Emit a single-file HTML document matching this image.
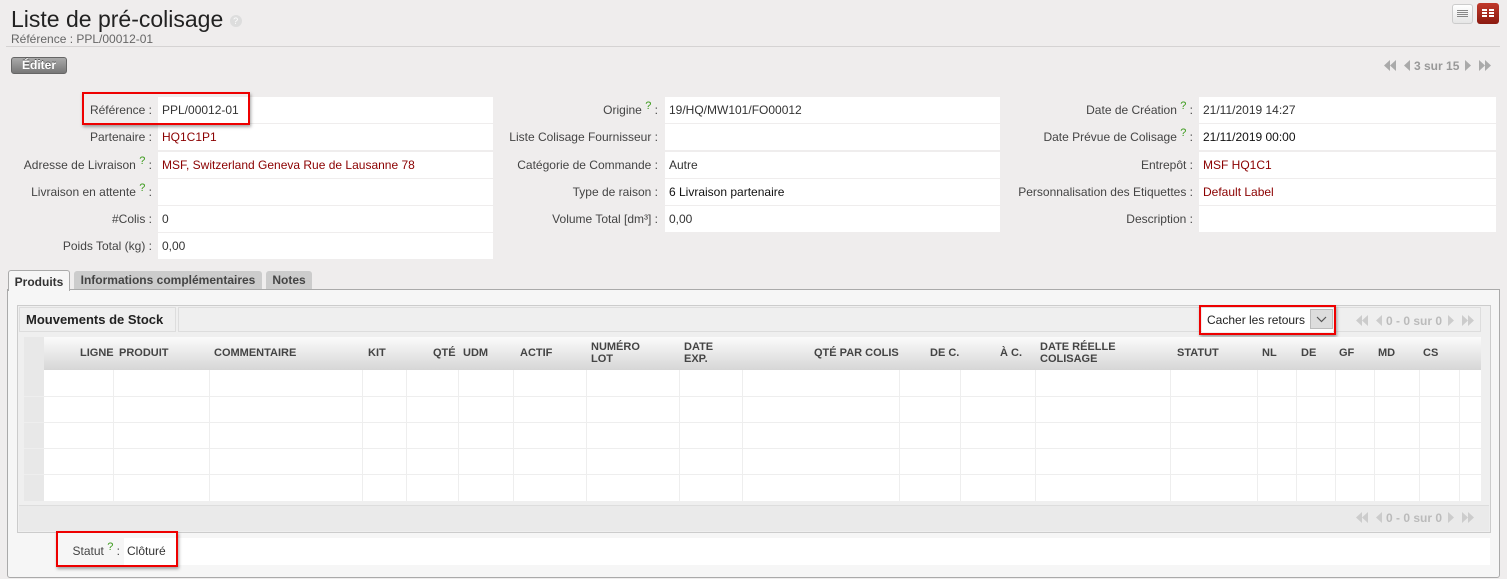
<!DOCTYPE html>
<html><head><meta charset="utf-8">
<style>
*{box-sizing:border-box}
body{margin:0;width:1507px;height:579px;background:#efeded;font-family:"Liberation Sans",Arial,sans-serif;font-size:12px;color:#333;position:relative;overflow:hidden}
.a{position:absolute}
.lbl{position:absolute;text-align:right;color:#444;font-size:12px;line-height:26px;height:26px}
.val{position:absolute;background:#fff;height:26px;line-height:26px;padding-left:4px;font-size:12px;color:#333}
.red{color:#8b0000}
.q{color:#3a9a1a;font-size:11px;position:relative;top:-5px;line-height:0}
.th{position:absolute;font-weight:bold;font-size:11px;color:#444;line-height:12px}
.redbox{position:absolute;border:2px solid #e00;box-shadow:1px 2px 3px rgba(0,0,0,.35)}
.pg{position:absolute;color:#bbb;font-weight:bold;font-size:12px;line-height:12px;white-space:nowrap}
.pg svg{vertical-align:-1px}
</style></head><body>
<div class="a" style="left:11px;top:6px;font-size:23px;color:#222">Liste de pré-colisage <span style="display:inline-block;width:12px;height:12px;border-radius:6px;background:#ddd;color:#fff;font-size:9px;text-align:center;line-height:12px;vertical-align:3px">?</span></div>
<div class="a" style="left:11px;top:32px;font-size:12px;color:#666">Référence : PPL/00012-01</div>
<div class="a" style="left:6px;top:46px;width:1494px;height:1px;background:#d5d3d3"></div>
<div class="a" style="left:1452px;top:4px;width:21px;height:20px;border:1px solid #ccc;border-radius:3px;background:linear-gradient(#fff,#e6e6e6)"><div style="margin:5px 4px;height:8px;background:repeating-linear-gradient(#888 0 1px,transparent 1px 2px)"></div></div>
<div class="a" style="left:1477px;top:3px;width:22px;height:21px;border-radius:3px;background:linear-gradient(#c0392b,#8b1a10)"><div style="margin:6px 5px;height:9px;background:repeating-linear-gradient(90deg,#fff 0 5px,transparent 5px 7px);-webkit-mask:repeating-linear-gradient(#000 0 2px,transparent 2px 3px)"></div></div>
<div class="a" style="left:11px;top:57px;width:56px;height:17px;border:1px solid #666;border-radius:3px;background:linear-gradient(#aaa,#777);color:#fff;font-weight:bold;font-size:12px;text-align:center;line-height:15px;text-shadow:0 -1px 0 #555">Éditer</div>

<div class="pg" style="left:1384px;top:60px;color:#999"><svg width="30" height="11"><path d="M0 5.5L6 0v11zM6 5.5L12 0v11zM20 5.5L26 0v11z" fill="#aaa"/></svg>3 sur 15<svg width="32" height="11" style="margin-left:4px"><path d="M2 0l6 5.5L2 11zM16 0l6 5.5L16 11zM22 0l6 5.5L22 11z" fill="#aaa"/></svg></div>

<!-- col1 -->
<div class="lbl" style="left:0;width:152px;top:97px">Référence :</div><div class="val" style="left:158px;width:335px;top:97px">PPL/00012-01</div>
<div class="lbl" style="left:0;width:152px;top:124px">Partenaire :</div><div class="val red" style="left:158px;width:335px;top:124px">HQ1C1P1</div>
<div class="lbl" style="left:0;width:152px;top:152px">Adresse de Livraison <span class="q">?</span> :</div><div class="val red" style="left:158px;width:335px;top:152px">MSF, Switzerland Geneva Rue de Lausanne 78</div>
<div class="lbl" style="left:0;width:152px;top:179px">Livraison en attente <span class="q">?</span> :</div><div class="val" style="left:158px;width:335px;top:179px"></div>
<div class="lbl" style="left:0;width:152px;top:206px">#Colis :</div><div class="val" style="left:158px;width:335px;top:206px">0</div>
<div class="lbl" style="left:0;width:152px;top:233px">Poids Total (kg) :</div><div class="val" style="left:158px;width:335px;top:233px">0,00</div>
<!-- col2 -->
<div class="lbl" style="left:480px;width:178px;top:97px">Origine <span class="q">?</span> :</div><div class="val" style="left:665px;width:335px;top:97px">19/HQ/MW101/FO00012</div>
<div class="lbl" style="left:480px;width:178px;top:124px">Liste Colisage Fournisseur :</div><div class="val" style="left:665px;width:335px;top:124px"></div>
<div class="lbl" style="left:480px;width:178px;top:152px">Catégorie de Commande :</div><div class="val" style="left:665px;width:335px;top:152px">Autre</div>
<div class="lbl" style="left:480px;width:178px;top:179px">Type de raison :</div><div class="val" style="left:665px;width:335px;top:179px;color:#111">6 Livraison partenaire</div>
<div class="lbl" style="left:480px;width:178px;top:206px">Volume Total [dm³] :</div><div class="val" style="left:665px;width:335px;top:206px">0,00</div>
<!-- col3 -->
<div class="lbl" style="left:1000px;width:193px;top:97px">Date de Création <span class="q">?</span> :</div><div class="val" style="left:1199px;width:297px;top:97px">21/11/2019 14:27</div>
<div class="lbl" style="left:1000px;width:193px;top:124px">Date Prévue de Colisage <span class="q">?</span> :</div><div class="val" style="left:1199px;width:297px;top:124px;color:#111">21/11/2019 00:00</div>
<div class="lbl" style="left:1000px;width:193px;top:152px">Entrepôt :</div><div class="val red" style="left:1199px;width:297px;top:152px">MSF HQ1C1</div>
<div class="lbl" style="left:1000px;width:193px;top:179px">Personnalisation des Etiquettes :</div><div class="val red" style="left:1199px;width:297px;top:179px">Default Label</div>
<div class="lbl" style="left:1000px;width:193px;top:206px">Description :</div><div class="val" style="left:1199px;width:297px;top:206px"></div>
<div class="redbox" style="left:82px;top:92px;width:168px;height:33px"></div>

<!-- tabs -->
<div class="a" style="left:7px;top:289px;width:1493px;height:289px;border:1px solid #aaa;border-radius:0 0 3px 3px;background:#f6f6f6"></div>
<div class="a" style="left:8px;top:270px;width:62px;height:21px;border:1px solid #aaa;border-bottom:none;border-radius:3px 3px 0 0;background:#f6f6f6;font-weight:bold;color:#333;text-align:center;line-height:22px">Produits</div>
<div class="a" style="left:74px;top:271px;width:188px;height:18px;border-radius:3px 3px 0 0;background:#ccc;font-weight:bold;color:#444;text-align:center;line-height:18px">Informations complémentaires</div>
<div class="a" style="left:266px;top:271px;width:46px;height:18px;border-radius:3px 3px 0 0;background:#ccc;font-weight:bold;color:#444;text-align:center;line-height:18px">Notes</div>

<div class="a" style="left:17px;top:305px;width:1474px;height:228px;border:1px solid #ccc;background:#efefef"></div>
<div class="a" style="left:19px;top:307px;width:157px;height:25px;border:1px solid #ddd;background:#efefef;font-weight:bold;font-size:13px;color:#222;line-height:24px;padding-left:6px">Mouvements de Stock</div>
<div class="a" style="left:178px;top:307px;width:1303px;height:25px;border:1px solid #ddd;background:#efefef"></div>
<div class="a" style="left:1202px;top:308px;width:131px;height:24px;background:#fff;font-size:12px;color:#222;line-height:24px;padding-left:5px">Cacher les retours</div>
<div class="a" style="left:1310px;top:309px;width:23px;height:20px;background:#ddd;border:1px solid #bbb"><svg width="21" height="18"><path d="M6 7l4.5 4.5L15 7" fill="none" stroke="#555" stroke-width="1.2"/></svg></div>
<div class="redbox" style="left:1199px;top:305px;width:137px;height:30px"></div>
<div class="pg" style="left:1356px;top:315px"><svg width="30" height="11"><path d="M0 5.5L6 0v11zM6 5.5L12 0v11zM20 5.5L26 0v11z" fill="#ccc"/></svg>0 - 0 sur 0<svg width="32" height="11" style="margin-left:4px"><path d="M2 0l6 5.5L2 11zM16 0l6 5.5L16 11zM22 0l6 5.5L22 11z" fill="#ccc"/></svg></div>

<div class="a" style="left:24px;top:337px;width:1457px;height:164px;background:#fff"></div>
<div class="a" style="left:24px;top:337px;width:20px;height:164px;background:#e8e8e8"></div>
<div class="a" style="left:44px;top:337px;width:1437px;height:33px;background:linear-gradient(#fbfbfb,#d6d6d6)"></div>
<svg class="a" style="left:0;top:0" width="1507" height="579">
<g stroke="#eee" stroke-width="1">
<line x1="24" x2="1481" y1="396.5" y2="396.5"/><line x1="24" x2="1481" y1="422.5" y2="422.5"/><line x1="24" x2="1481" y1="448.5" y2="448.5"/><line x1="24" x2="1481" y1="474.5" y2="474.5"/>
<line x1="113.5" x2="113.5" y1="370" y2="501"/><line x1="209.5" x2="209.5" y1="370" y2="501"/><line x1="362.5" x2="362.5" y1="370" y2="501"/><line x1="406.5" x2="406.5" y1="370" y2="501"/><line x1="458.5" x2="458.5" y1="370" y2="501"/><line x1="513.5" x2="513.5" y1="370" y2="501"/><line x1="586.5" x2="586.5" y1="370" y2="501"/><line x1="679.5" x2="679.5" y1="370" y2="501"/><line x1="742.5" x2="742.5" y1="370" y2="501"/><line x1="899.5" x2="899.5" y1="370" y2="501"/><line x1="960.5" x2="960.5" y1="370" y2="501"/><line x1="1035.5" x2="1035.5" y1="370" y2="501"/><line x1="1170.5" x2="1170.5" y1="370" y2="501"/><line x1="1257.5" x2="1257.5" y1="370" y2="501"/><line x1="1296.5" x2="1296.5" y1="370" y2="501"/><line x1="1335.5" x2="1335.5" y1="370" y2="501"/><line x1="1374.5" x2="1374.5" y1="370" y2="501"/><line x1="1419.5" x2="1419.5" y1="370" y2="501"/><line x1="1459.5" x2="1459.5" y1="370" y2="501"/>
</g></svg>
<div class="th" style="left:80px;top:347px">LIGNE</div>
<div class="th" style="left:119px;top:347px">PRODUIT</div>
<div class="th" style="left:214px;top:347px">COMMENTAIRE</div>
<div class="th" style="left:368px;top:347px">KIT</div>
<div class="th" style="left:433px;top:347px">QTÉ</div>
<div class="th" style="left:463px;top:347px">UDM</div>
<div class="th" style="left:520px;top:347px">ACTIF</div>
<div class="th" style="left:591px;top:341px">NUMÉRO<br>LOT</div>
<div class="th" style="left:684px;top:341px">DATE<br>EXP.</div>
<div class="th" style="left:814px;top:347px">QTÉ PAR COLIS</div>
<div class="th" style="left:930px;top:347px">DE C.</div>
<div class="th" style="left:1000px;top:347px">À C.</div>
<div class="th" style="left:1040px;top:341px">DATE RÉELLE<br>COLISAGE</div>
<div class="th" style="left:1177px;top:347px">STATUT</div>
<div class="th" style="left:1262px;top:347px">NL</div>
<div class="th" style="left:1301px;top:347px">DE</div>
<div class="th" style="left:1339px;top:347px">GF</div>
<div class="th" style="left:1378px;top:347px">MD</div>
<div class="th" style="left:1423px;top:347px">CS</div>

<div class="a" style="left:19px;top:505px;width:1470px;height:26px;background:#eaeaea;border-top:1px solid #ddd"></div>
<div class="pg" style="left:1356px;top:512px"><svg width="30" height="11"><path d="M0 5.5L6 0v11zM6 5.5L12 0v11zM20 5.5L26 0v11z" fill="#ccc"/></svg>0 - 0 sur 0<svg width="32" height="11" style="margin-left:4px"><path d="M2 0l6 5.5L2 11zM16 0l6 5.5L16 11zM22 0l6 5.5L22 11z" fill="#ccc"/></svg></div>

<div class="a" style="left:60px;top:538px;width:1430px;height:27px;background:#fff"></div>
<div class="a" style="left:60px;top:538px;width:64px;height:27px;background:#f6f6f6"></div>
<div class="lbl" style="left:60px;width:60px;top:538px;line-height:27px">Statut <span class="q">?</span> :</div>
<div class="a" style="left:127px;top:538px;line-height:27px;font-size:12px;color:#333">Clôturé</div>
<div class="redbox" style="left:56px;top:531px;width:122px;height:36px"></div>
</body></html>
